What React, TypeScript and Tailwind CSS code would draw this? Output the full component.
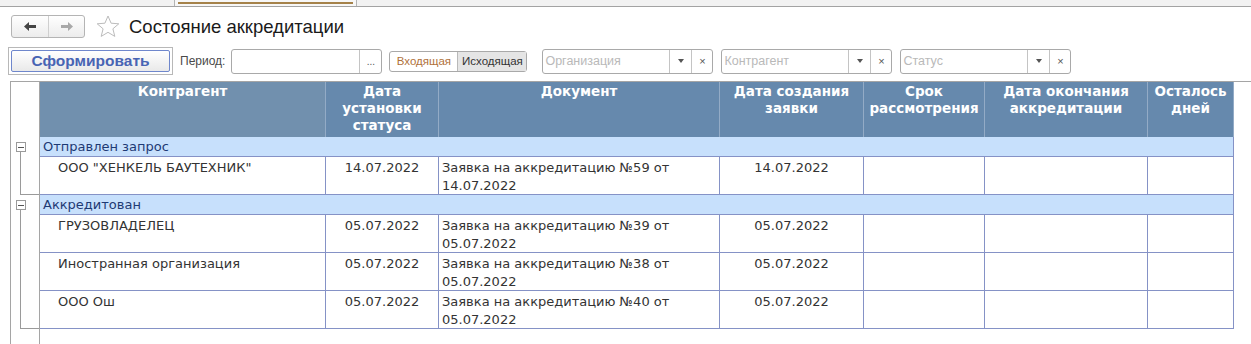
import React from "react";

const body = { fontFamily: '"Liberation Sans", Arial, sans-serif' };
const head = { fontFamily: '"DejaVu Sans", Verdana, sans-serif' };

const cols = [
  { title: "Контрагент", w: "w-[286px]", bg: "bg-[#7190ae]" },
  { title: "Дата установки статуса", w: "w-[113px]", bg: "bg-[#6689ad]" },
  { title: "Документ", w: "w-[281px]", bg: "bg-[#6689ad]" },
  { title: "Дата создания заявки", w: "w-[144px]", bg: "bg-[#6689ad]" },
  { title: "Срок рассмотрения", w: "w-[121px]", bg: "bg-[#6689ad]" },
  { title: "Дата окончания аккредитации", w: "w-[163px]", bg: "bg-[#6689ad]" },
  { title: "Осталось дней", w: "w-[86px]", bg: "bg-[#6689ad]" },
];

interface Row {
  name: string;
  date: string;
  doc: string;
}

const groups: { title: string; rows: Row[] }[] = [
  {
    title: "Отправлен запрос",
    rows: [
      { name: 'ООО "ХЕНКЕЛЬ БАУТЕХНИК"', date: "14.07.2022", doc: "Заявка на аккредитацию №59 от 14.07.2022" },
    ],
  },
  {
    title: "Аккредитован",
    rows: [
      { name: "ГРУЗОВЛАДЕЛЕЦ", date: "05.07.2022", doc: "Заявка на аккредитацию №39 от 05.07.2022" },
      { name: "Иностранная организация", date: "05.07.2022", doc: "Заявка на аккредитацию №38 от 05.07.2022" },
      { name: "ООО Ош", date: "05.07.2022", doc: "Заявка на аккредитацию №40 от 05.07.2022" },
    ],
  },
];

const ComboField = ({ placeholder }: { placeholder: string }) => (
  <div className="flex h-[25px] w-[171px] rounded-[3px] border border-[#a9a9a9] bg-white">
    <div className="flex-1 px-[2px] pt-[4px] text-[12.5px] leading-[15px] text-[#b9b9b9]">{placeholder}</div>
    <div className="flex w-[22px] items-center justify-center border-l border-[#c4c4c4]">
      <svg width="6" height="4" viewBox="0 0 6 4">
        <path d="M0 0h6L3 4z" fill="#555" />
      </svg>
    </div>
    <div className="flex w-[21px] items-center justify-center border-l border-[#c4c4c4] text-[11px] text-[#555]">
      ×
    </div>
  </div>
);

const TreeCell = ({ kind }: { kind: "group" | "row" | "last" | "none" }) => (
  <div className="relative w-[29px] shrink-0 border-r border-[#a5a5a5] bg-white">
    {kind === "group" && (
      <>
        <div className="absolute left-[5px] top-[5px] flex h-[10px] w-[10px] items-center justify-center border border-[#9a9a9a] bg-white">
          <div className="h-px w-[6px] bg-[#555]" />
        </div>
        <div className="absolute bottom-0 left-[9px] top-[15px] w-px bg-[#9a9a9a]" />
      </>
    )}
    {kind === "row" && <div className="absolute bottom-0 left-[9px] top-0 w-px bg-[#9a9a9a]" />}
    {kind === "last" && (
      <div className="absolute bottom-0 left-[9px] right-0 top-0 border-b border-l border-[#9a9a9a]" />
    )}
  </div>
);

export default function App() {
  return (
    <div className="flex h-[344px] w-[1251px] flex-col overflow-hidden bg-white" style={body}>
      {/* top tabs strip */}
      <div className="flex h-[7px] shrink-0 border-b border-[#a3a3a3] bg-[#f2f2f2]">
        <div className="ml-[174px] w-[183px] border-x border-[#b4b4b4] bg-[#f7f7f7] px-[3px] pt-[2px]">
          <div className="h-[2px] bg-[#a5824a]" />
        </div>
      </div>

      {/* title row */}
      <div className="ml-[11px] mt-[8px] flex h-[23px] items-center">
        <div className="flex h-[23px] w-[74px] rounded-[3px] border border-[#b4b4b4] bg-gradient-to-b from-white to-[#ececec]">
          <div className="flex w-[37px] items-center justify-center border-r border-[#cfcfcf]">
            <svg width="12" height="9" viewBox="0 0 12 9">
              <path d="M0 4.5L5 0v3h7v3H5v3z" fill="#444" />
            </svg>
          </div>
          <div className="flex flex-1 items-center justify-center">
            <svg width="12" height="9" viewBox="0 0 12 9">
              <path d="M12 4.5L7 0v3H0v3h7v3z" fill="#a8a8a8" />
            </svg>
          </div>
        </div>
        <svg className="ml-[11px]" width="24" height="23" viewBox="0 0 24 23">
          <path
            d="M12 1l3.1 7.2 7.7.6-5.9 5 1.9 7.6L12 17.3l-6.8 4.1 1.9-7.6-5.9-5 7.7-.6z"
            fill="none"
            stroke="#bcbcbc"
            strokeWidth="1"
          />
        </svg>
        <div className="ml-[9px] text-[18.5px] leading-[22px] text-[#1a1a1a]">Состояние аккредитации</div>
      </div>

      {/* command bar */}
      <div className="ml-[8px] mt-[9px] flex h-[28px] items-center">
        <div className="h-[28px] w-[165px] border border-[#b8b8b8] p-[2px]">
          <div className="flex h-full items-center justify-center rounded-[2px] border border-[#6f87cc] bg-gradient-to-b from-white to-[#e9e9e9] text-[15.5px] font-bold text-[#4864b4]">
            Сформировать
          </div>
        </div>
        <div className="ml-[7px] text-[12px] text-[#4a4a4a]">Период:</div>
        <div className="ml-[6px] flex h-[25px] w-[151px] rounded-[3px] border border-[#a9a9a9] bg-white">
          <div className="flex-1" />
          <div className="flex w-[22px] items-end justify-center border-l border-[#c4c4c4] pb-[6px] text-[10px] leading-[10px] text-[#555]">
            ...
          </div>
        </div>
        <div className="ml-[7px] flex h-[21px] rounded-[3px] border border-[#a9a9a9] text-[11.5px] leading-[19px]">
          <div className="w-[67px] text-center text-[#b0713a]">Входящая</div>
          <div className="w-[69px] border-l border-[#b9b9b9] bg-[#e5e5e5] text-center text-[#333]">Исходящая</div>
        </div>
        <div className="ml-[15px]">
          <ComboField placeholder="Организация" />
        </div>
        <div className="ml-[8px]">
          <ComboField placeholder="Контрагент" />
        </div>
        <div className="ml-[8px]">
          <ComboField placeholder="Статус" />
        </div>
      </div>

      {/* report table */}
      <div className="ml-[10px] mt-[6px] flex flex-1 flex-col border-l border-t border-[#a5a5a5]">
        {/* header */}
        <div className="flex h-[55px] shrink-0">
          <TreeCell kind="none" />
          {cols.map((c) => (
            <div
              key={c.title}
              className={`${c.w} ${c.bg} shrink-0 border-r border-[#93abc6] px-[2px] pt-[1px] text-center text-[13.5px] font-bold leading-[17px] text-white`}
              style={head}
            >
              {c.title}
            </div>
          ))}
        </div>

        {groups.map((g) => (
          <React.Fragment key={g.title}>
            <div className="flex h-[20px] shrink-0">
              <TreeCell kind="group" />
              <div
                className="w-[1194px] shrink-0 border-b border-r border-[#8592c6] bg-[#c7e0fc] pl-[3px] text-[13px] leading-[19px] text-[#1e3a74]"
                style={head}
              >
                {g.title}
              </div>
            </div>
            {g.rows.map((r, i) => (
              <div key={r.name} className="flex h-[38px] shrink-0">
                <TreeCell kind={i === g.rows.length - 1 ? "last" : "row"} />
                <div className="flex border-b border-[#8592c6] text-[13px] leading-[18px] text-[#333]" style={head}>
                  <div className="w-[286px] shrink-0 border-r border-[#8592c6] pl-[18px] pt-[2px]">{r.name}</div>
                  <div className="w-[113px] shrink-0 border-r border-[#8592c6] pt-[2px] text-center">{r.date}</div>
                  <div className="w-[281px] shrink-0 border-r border-[#8592c6] pl-[3px] pr-[30px] pt-[2px]">{r.doc}</div>
                  <div className="w-[144px] shrink-0 border-r border-[#8592c6] pt-[2px] text-center">{r.date}</div>
                  <div className="w-[121px] shrink-0 border-r border-[#8592c6]" />
                  <div className="w-[163px] shrink-0 border-r border-[#8592c6]" />
                  <div className="w-[86px] shrink-0 border-r border-[#8592c6]" />
                </div>
              </div>
            ))}
          </React.Fragment>
        ))}
        <div className="flex flex-1">
          <TreeCell kind="none" />
        </div>
      </div>
    </div>
  );
}
